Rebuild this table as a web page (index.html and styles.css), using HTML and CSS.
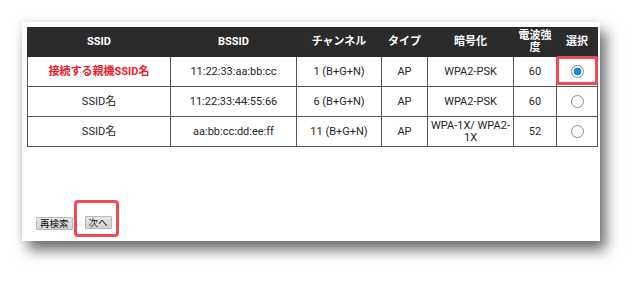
FILE: index.html
```html
<!DOCTYPE html>
<html lang="ja">
<head>
<meta charset="utf-8">
<link rel="stylesheet" href="styles.css">
</head>
<body>
<div class="card">
  <table class="ap-table">
    <colgroup>
      <col class="c-ssid"><col class="c-bssid"><col class="c-ch"><col class="c-type"><col class="c-enc"><col class="c-sig"><col class="c-sel">
    </colgroup>
    <thead>
      <tr><th>SSID</th><th>BSSID</th><th>チャンネル</th><th>タイプ</th><th>暗号化</th><th>電波強度</th><th>選択</th></tr>
    </thead>
    <tbody>
      <tr>
        <td class="target">接続する親機SSID名</td><td>11:22:33:aa:bb:cc</td><td>1 (B+G+N)</td><td>AP</td><td>WPA2-PSK</td><td>60</td>
        <td class="sel marked"><span class="radio on"></span></td>
      </tr>
      <tr>
        <td>SSID名</td><td>11:22:33:44:55:66</td><td>6 (B+G+N)</td><td>AP</td><td>WPA2-PSK</td><td>60</td>
        <td class="sel"><span class="radio"></span></td>
      </tr>
      <tr>
        <td>SSID名</td><td>aa:bb:cc:dd:ee:ff</td><td>11 (B+G+N)</td><td>AP</td><td class="wrap">WPA-1X/ WPA2-1X</td><td>52</td>
        <td class="sel"><span class="radio"></span></td>
      </tr>
    </tbody>
  </table>
  <div class="actions">
    <button class="btn">再検索</button>
    <span class="marked-btn"><button class="btn">次へ</button></span>
  </div>
</div>
</body>
</html>
```

FILE: styles.css
```css
html, body {
  margin: 0;
  padding: 0;
  background: #ffffff;
}
body {
  width: 642px;
  height: 283px;
  overflow: hidden;
  font-family: Roboto, "Noto Sans CJK JP", sans-serif;
}
.card {
  margin: 22px 0 0 22px;
  width: 578px;
  height: 219px;
  box-sizing: border-box;
  padding: 5px 3px 0 5px;
  background: #ffffff;
  display: flex;
  flex-direction: column;
  box-shadow: 6px 9px 13px rgba(0, 0, 0, 0.58), -2px -2px 6px rgba(0, 0, 0, 0.06);
}
.ap-table {
  width: 570px;
  border-collapse: collapse;
  table-layout: fixed;
  font-size: 11px;
  color: #262626;
}
.c-ssid { width: 143px; }
.c-bssid { width: 126px; }
.c-ch { width: 85px; }
.c-type { width: 46px; }
.c-enc { width: 86px; }
.c-sig { width: 43px; }
.c-sel { width: 41px; }
.ap-table th {
  background: #2b2b2b;
  color: #ffffff;
  font-weight: bold;
  height: 28px;
  padding: 0 2px;
  line-height: 12px;
  border: 1px solid #2b2b2b;
  text-align: center;
}
.ap-table td {
  height: 29px;
  padding: 0 2px;
  border: 1px solid #555;
  text-align: center;
  line-height: 12px;
}
.ap-table td.target {
  color: #e8212b;
  font-weight: bold;
}
.ap-table td.sel {
  position: relative;
}
.ap-table td.marked::after {
  content: "";
  position: absolute;
  left: -1px;
  right: -1px;
  top: -1px;
  bottom: 1px;
  border: 3px solid #f04a50;
  border-radius: 2px;
}
.radio {
  display: inline-block;
  width: 11px;
  height: 11px;
  border: 1px solid #8a8a8a;
  border-radius: 50%;
  background: #fff;
  vertical-align: middle;
}
.radio.on {
  background: radial-gradient(circle, #1a8bd3 0 3.6px, #ffffff 4.2px);
}
.actions {
  margin-top: auto;
  padding: 0 0 11px 9px;
  display: flex;
  gap: 12px;
  align-items: flex-end;
}
.btn {
  font-family: "Noto Sans CJK JP", sans-serif;
  font-size: 9.5px;
  line-height: 11px;
  height: 13px;
  padding: 0 3px;
  margin: 0;
  border: 1px solid #b8b8b8;
  background: linear-gradient(#e6e6e6, #d4d4d4);
  color: #111;
  border-radius: 1px;
}
.marked-btn {
  position: relative;
  display: inline-block;
}
.marked-btn::after {
  content: "";
  position: absolute;
  left: -11px;
  right: -7px;
  top: -11px;
  bottom: -7px;
  border: 3px solid #f04a50;
  border-radius: 4px;
}
```
